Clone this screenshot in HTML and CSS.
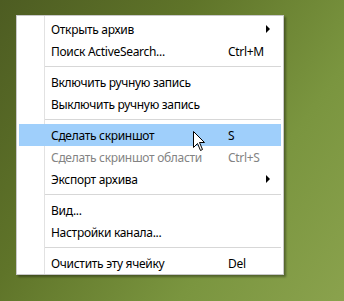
FILE: index.html
```html
<!DOCTYPE html>
<html>
<head>
<meta charset="utf-8">
<link rel="stylesheet" href="styles.css">
</head>
<body>
<div class="desk">
  <div class="menu">
    <div class="item"><span class="label">Открыть архив</span><span class="key"></span><span class="sub"></span></div>
    <div class="item"><span class="label">Поиск ActiveSearch...</span><span class="key">Ctrl+M</span><span class="sub none"></span></div>
    <div class="sep"></div>
    <div class="item"><span class="label">Включить ручную запись</span><span class="key"></span><span class="sub none"></span></div>
    <div class="item"><span class="label">Выключить ручную запись</span><span class="key"></span><span class="sub none"></span></div>
    <div class="sep"></div>
    <div class="item active"><span class="label">Сделать скриншот</span><span class="key">S</span><span class="sub none"></span></div>
    <div class="item disabled"><span class="label">Сделать скриншот области</span><span class="key">Ctrl+S</span><span class="sub none"></span></div>
    <div class="item"><span class="label">Экспорт архива</span><span class="key"></span><span class="sub"></span></div>
    <div class="sep"></div>
    <div class="item"><span class="label">Вид...</span><span class="key"></span><span class="sub none"></span></div>
    <div class="item"><span class="label">Настройки канала...</span><span class="key"></span><span class="sub none"></span></div>
    <div class="sep"></div>
    <div class="item"><span class="label">Очистить эту ячейку</span><span class="key">Del</span><span class="sub none"></span></div>
  </div>
  <svg class="cursor" width="13" height="21" viewBox="0 0 13 21">
    <path d="M0.5 0.5 L0.5 16.5 L4.5 12.5 L7.5 19.5 L9.5 18.5 L6.5 11.5 L11.5 11.5 Z" fill="#fff" stroke="#000" stroke-width="1" stroke-linejoin="miter"/>
  </svg>
</div>
</body>
</html>
```
FILE: styles.css
```css
html, body {
  margin: 0;
  padding: 0;
}
body {
  width: 344px;
  height: 301px;
  overflow: hidden;
}
.desk {
  position: relative;
  width: 344px;
  height: 301px;
  background: linear-gradient(125deg, #4d5c22 0%, #5f7429 35%, #7a953f 70%, #8aa24d 100%);
  padding: 15px 0 0 16px;
  box-sizing: border-box;
}
.menu {
  width: 262px;
  border: 1px solid #c8c8c8;
  padding: 2px 2px 0 2px;
  box-sizing: content-box;
  box-shadow: 2px 2px 2px rgba(0, 0, 0, 0.35);
  font-family: "Noto Sans", "Open Sans", sans-serif;
  font-size: 12px;
  letter-spacing: -0.3px;
  color: #000;
  background-image: linear-gradient(to right, transparent 27px, #e2e2e2 27px, #e2e2e2 28px, #fff 28px, #fff 29px, transparent 29px);
  background-color: #fff;
}
.item {
  display: flex;
  align-items: center;
  height: 22px;
  position: relative;
}
.item.active {
  background: #9fcffb;
}
.label {
  padding-left: 32px;
  flex: 1;
  white-space: nowrap;
}
.key {
  width: 38px;
}
.sub {
  width: 15px;
  display: flex;
  align-items: center;
}
.sub::before {
  content: "";
  border-left: 4px solid #000;
  border-top: 4px solid transparent;
  border-bottom: 4px solid transparent;
}
.sub.none::before {
  display: none;
}
.disabled {
  color: #838383;
}
.sep {
  height: 9px;
  margin-left: 26px;
  position: relative;
}
.sep::after {
  content: "";
  position: absolute;
  left: 0;
  right: 0;
  top: 4px;
  height: 1px;
  background: #d7d7d7;
}
.cursor {
  position: absolute;
  left: 193px;
  top: 131px;
}
```
